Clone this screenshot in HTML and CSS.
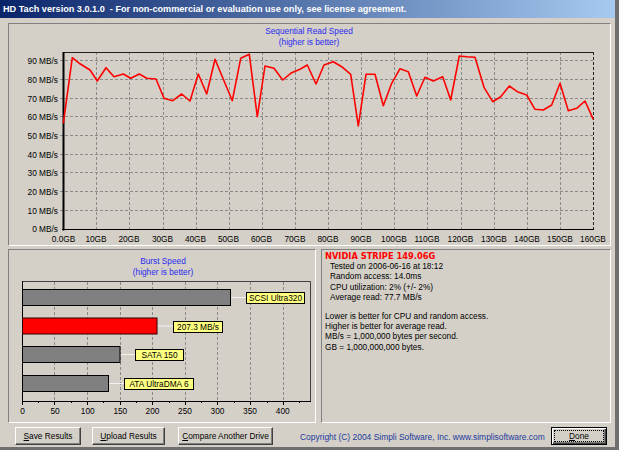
FILE: index.html
```html
<!DOCTYPE html>
<html>
<head>
<meta charset="utf-8">
<title>HD Tach</title>
<link rel="stylesheet" href="styles.css">
</head>
<body>
<div class="window">
  <div class="titlebar">HD Tach version 3.0.1.0&nbsp; - For non-commercial or evaluation use only, see license agreement.</div>
  <div class="client">
    <div class="panel seq">
      <svg class="chart" width="601" height="221" viewBox="9 24 601 221">
        <text class="ctitle" x="309" y="34" text-anchor="middle">Sequential Read Speed</text>
        <text class="ctitle" x="309" y="45.3" text-anchor="middle">(higher is better)</text>
        <path class="grid" d="M60 210.5H593M60 191.5H593M60 172.5H593M60 154.5H593M60 135.5H593M60 116.5H593M60 98.5H593M60 79.5H593M60 60.5H593"/>
        <path class="grid" d="M96.5 52V231M129.5 52V231M163.5 52V231M196.5 52V231M229.5 52V231M262.5 52V231M295.5 52V231M328.5 52V231M361.5 52V231M394.5 52V231M427.5 52V231M461.5 52V231M494.5 52V231M527.5 52V231M560.5 52V231"/>
        <path class="border-dash" d="M593.5 52V230"/>
        <path class="border" d="M63 52.5H594"/>
        <path class="axis" d="M62 229.5H594"/>
        <path class="axis-thick" d="M63.5 52V230.5"/>
        <polyline class="data" points="63.3,123.3 72.3,57.7 80,63.8 90,70 97.3,81 106,67.7 114,76.7 123.3,74 130.7,78.3 139.3,74 146.7,78.3 156,79 164,98.3 172.7,100.7 181.7,94 190,101 198.3,74 206.7,94 215,59.3 232.3,100.7 240.7,58.3 249.3,54.3 257.3,116.7 265,66 274,68.3 282.7,80 291.7,72.7 300,69.3 307.3,65 316,84 324,65 333.3,61.7 341.7,66.7 350.7,74.3 358.3,126 366,74.3 375,74.3 383.3,105.7 391.7,83.3 400,68.7 408.3,71.7 416.7,96 425,77.3 433.3,81 442.7,76.7 450.7,100 459.3,56 466.7,56.7 475,57.3 484,87.3 492.7,101.7 500.7,96.7 509.3,86 517.3,91.7 526.7,95 535,109.3 543.3,110 551.7,105 560,83.3 568.3,110.7 576.7,108.3 585,101 593.3,119.3"/>
        <g class="lbl" text-anchor="end">
          <text x="58" y="63.5">90 MB/s</text>
          <text x="58" y="82.5">80 MB/s</text>
          <text x="58" y="101.5">70 MB/s</text>
          <text x="58" y="119.5">60 MB/s</text>
          <text x="58" y="138.5">50 MB/s</text>
          <text x="58" y="157.5">40 MB/s</text>
          <text x="58" y="175.5">30 MB/s</text>
          <text x="58" y="194.5">20 MB/s</text>
          <text x="58" y="213.5">10 MB/s</text>
          <text x="58" y="232">0 MB/s</text>
        </g>
        <g class="lbl" text-anchor="middle">
          <text x="63.5" y="242">0.0GB</text>
          <text x="96" y="242">10GB</text>
          <text x="129" y="242">20GB</text>
          <text x="162.5" y="242">30GB</text>
          <text x="195.5" y="242">40GB</text>
          <text x="228.5" y="242">50GB</text>
          <text x="261.5" y="242">60GB</text>
          <text x="295" y="242">70GB</text>
          <text x="328" y="242">80GB</text>
          <text x="361" y="242">90GB</text>
          <text x="394" y="242">100GB</text>
          <text x="427" y="242">110GB</text>
          <text x="460.5" y="242">120GB</text>
          <text x="494" y="242">130GB</text>
          <text x="527" y="242">140GB</text>
          <text x="560" y="242">150GB</text>
          <text x="593" y="242">160GB</text>
        </g>
      </svg>
    </div>
    <div class="row">
      <div class="panel burst">
        <svg class="chart" width="306" height="172" viewBox="9 250 306 172">
          <text class="ctitle" x="163" y="263.7" text-anchor="middle">Burst Speed</text>
          <text class="ctitle" x="163" y="274.7" text-anchor="middle">(higher is better)</text>
          <path class="grid" d="M54.5 282V401M87.5 282V401M120.5 282V401M152.5 282V401M185.5 282V401M217.5 282V401M250.5 282V401M283.5 282V401"/>
          <path class="frame" d="M22 281.5H310.5V401"/>
          <path class="axis" d="M22.5 281V402M22 401.5H311"/>
          <path class="axis" d="M22.5 401V405M54.5 401V405M87.5 401V405M120.5 401V405M152.5 401V405M185.5 401V405M217.5 401V405M250.5 401V405M283.5 401V405"/>
          <path class="axis" d="M38.5 401V403M71.5 401V403M103.5 401V403M136.5 401V403M169.5 401V403M201.5 401V403M234.5 401V403M267.5 401V403M299.5 401V403"/>
          <path class="connector" d="M231 297.5H246M157.5 326H173M120.5 354.5H135.5M109 383.5H124"/>
          <rect class="bar" x="22.5" y="289.5" width="208" height="16"/>
          <rect class="bar red" x="22.5" y="318" width="134.5" height="16"/>
          <rect class="bar" x="22.5" y="346.5" width="97.5" height="16"/>
          <rect class="bar" x="22.5" y="375.5" width="86" height="16"/>
          <rect class="tag" x="246.5" y="292.5" width="58" height="11"/>
          <rect class="tag" x="173.5" y="321.5" width="49" height="11"/>
          <rect class="tag" x="135.5" y="349.5" width="48" height="11"/>
          <rect class="tag" x="124.5" y="378.5" width="69" height="11"/>
          <g class="lbl" text-anchor="middle">
            <text x="275.5" y="301">SCSI Ultra320</text>
            <text x="198" y="330">207.3 MB/s</text>
            <text x="159.5" y="358">SATA 150</text>
            <text x="159" y="387">ATA UltraDMA 6</text>
          </g>
          <g class="lbl" text-anchor="middle">
            <text x="22.5" y="414">0</text>
            <text x="55" y="414">50</text>
            <text x="87.7" y="414">100</text>
            <text x="120.3" y="414">150</text>
            <text x="152.5" y="414">200</text>
            <text x="185" y="414">250</text>
            <text x="217.5" y="414">300</text>
            <text x="250" y="414">350</text>
            <text x="282.7" y="414">400</text>
          </g>
        </svg>
      </div>
      <div class="panel info">
        <div class="drive">NVIDIA STRIPE 149.06G</div>
        <div class="ind">Tested on 2006-06-16 at 18:12</div>
        <div class="ind">Random access: 14.0ms</div>
        <div class="ind">CPU utilization: 2% (+/- 2%)</div>
        <div class="ind">Average read: 77.7 MB/s</div>
        <div class="blank"></div>
        <div>Lower is better for CPU and random access.</div>
        <div>Higher is better for average read.</div>
        <div>MB/s = 1,000,000 bytes per second.</div>
        <div>GB = 1,000,000,000 bytes.</div>
      </div>
    </div>
    <div class="footer">
      <button class="btn save"><u>S</u>ave Results</button>
      <button class="btn upload"><u>U</u>pload Results</button>
      <button class="btn compare"><u>C</u>ompare Another Drive</button>
      <span class="copy">Copyright (C) 2004 Simpli Software, Inc. www.simplisoftware.com</span>
      <button class="btn done"><u>D</u>one</button>
    </div>
  </div>
</div>
</body>
</html>
```

FILE: styles.css
```css
* { box-sizing: border-box; }
html, body { margin: 0; padding: 0; }
body {
  width: 619px;
  height: 450px;
  overflow: hidden;
  background: #d4d0c8;
  font-family: "Liberation Sans", Arial, sans-serif;
  font-size: 8.3px;
  color: #000;
}
.window {
  width: 619px;
  height: 450px;
  display: flex;
  flex-direction: column;
  border-right: 4px solid #6f6f6f;
  border-bottom: 3px solid #6f6f6f;
}
.titlebar {
  flex: none;
  height: 18px;
  padding-left: 3px;
  background: linear-gradient(to right, #0a246a, #a6caf0);
  color: #fff;
  font-weight: bold;
  font-size: 9.15px;
  line-height: 18px;
  white-space: nowrap;
  overflow: hidden;
}
.client {
  flex: 1;
  display: flex;
  flex-direction: column;
  padding: 5px 4px 0 8px;
}
.panel {
  border: 1px solid;
  border-color: #808080 #ffffff #ffffff #808080;
}
.seq { height: 223px; flex: none; }
.row {
  flex: none;
  display: flex;
  gap: 5px;
  margin-top: 3px;
  height: 174px;
}
.burst { width: 308px; flex: none; }
.info {
  flex: 1;
  padding: 1px 0 0 3px;
  line-height: 10.2px;
  white-space: nowrap;
}
.drive {
  color: #ff0000;
  font-family: "DejaVu Sans", Verdana, sans-serif;
  font-weight: bold;
  font-size: 8.3px;
}
.ind { padding-left: 5px; }
.blank { height: 9px; }

.chart { display: block; }
.chart text { font-family: "Liberation Sans", Arial, sans-serif; font-size: 8.3px; fill: #000; }
.chart .ctitle { fill: #2a2aee; }
.grid { fill: none; stroke: #8a8a8a; stroke-width: 1; stroke-dasharray: 3 2; }
.border-dash { fill: none; stroke: #202020; stroke-width: 1; stroke-dasharray: 3 2; }
.border { fill: none; stroke: #202020; stroke-width: 1; }
.frame { fill: none; stroke: #404040; stroke-width: 1; }
.axis { fill: none; stroke: #000; stroke-width: 1; }
.axis-thick { fill: none; stroke: #000; stroke-width: 2; }
.data { fill: none; stroke: #ff0000; stroke-width: 1.6; stroke-linejoin: round; }
.bar { fill: #808080; stroke: #000; stroke-width: 1; }
.bar.red { fill: #ff0000; stroke: #300000; }
.tag { fill: #ffff80; stroke: #000; stroke-width: 1; }
.connector { fill: none; stroke: #f2f2f2; stroke-width: 1; }

.footer {
  flex: 1;
  display: flex;
  align-items: flex-start;
  padding: 4px 4px 0 7px;
}
.btn {
  height: 18px;
  padding: 0;
  margin: 0;
  font-family: "Liberation Sans", Arial, sans-serif;
  font-size: 8.3px;
  color: #000;
  background: #d4d0c8;
  border: 1px solid;
  border-color: #ffffff #404040 #404040 #ffffff;
  box-shadow: inset -1px -1px #808080;
  line-height: 15px;
  text-align: center;
}
.btn u { text-decoration: underline; }
.save { width: 66px; }
.upload { width: 73px; margin-left: 11px; }
.compare { width: 95px; margin-left: 13px; }
.copy {
  margin-left: 27px;
  color: #1d3a9c;
  font-size: 8.45px;
  line-height: 18px;
  margin-top: 1px;
  white-space: nowrap;
}
.done {
  width: 56px;
  margin-left: auto;
  border-color: #000;
  box-shadow: inset 1px 1px #ffffff, inset -1px -1px #404040, inset -2px -2px #808080;
  outline: 1px dotted #000;
  outline-offset: -4px;
}
```
